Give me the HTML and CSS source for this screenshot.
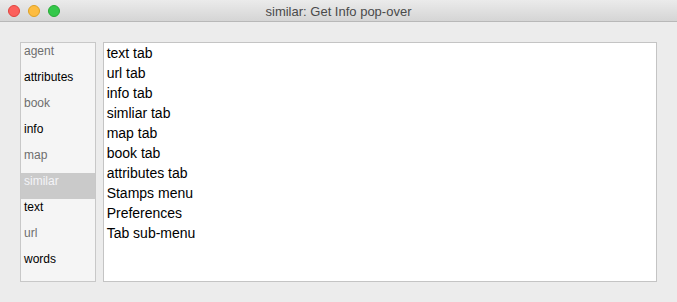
FILE: index.html
```html
<!DOCTYPE html>
<html>
<head>
<meta charset="utf-8">
<link rel="stylesheet" href="styles.css">
</head>
<body>
<div class="window">
  <div class="titlebar">
    <div class="lights">
      <span class="light red"></span>
      <span class="light yellow"></span>
      <span class="light green"></span>
    </div>
    <div class="title">similar: Get Info pop-over</div>
  </div>
  <div class="content">
    <ul class="sidebar">
      <li class="dim">agent</li>
      <li>attributes</li>
      <li class="dim">book</li>
      <li>info</li>
      <li class="dim">map</li>
      <li class="selected">similar</li>
      <li>text</li>
      <li class="dim">url</li>
      <li>words</li>
    </ul>
    <div class="textview">
      <div>text tab</div>
      <div>url tab</div>
      <div>info tab</div>
      <div>simliar tab</div>
      <div>map tab</div>
      <div>book tab</div>
      <div>attributes tab</div>
      <div>Stamps menu</div>
      <div>Preferences</div>
      <div>Tab sub-menu</div>
    </div>
  </div>
</div>
</body>
</html>
```
FILE: styles.css
```css
html, body {
  margin: 0;
  padding: 0;
  background: #ececec;
}
.window {
  width: 677px;
  height: 302px;
  background: #ececec;
  font-family: "Liberation Sans", Arial, sans-serif;
  display: flex;
  flex-direction: column;
}
.titlebar {
  height: 21px;
  border-bottom: 1px solid #b8b8b8;
  background: linear-gradient(#ebebeb, #d5d5d5);
  position: relative;
  display: flex;
  align-items: center;
  justify-content: center;
}
.lights {
  position: absolute;
  left: 8px;
  top: 5px;
  display: flex;
  gap: 8px;
}
.light {
  width: 12px;
  height: 12px;
  border-radius: 50%;
  box-sizing: border-box;
}
.red { background: #fc605c; border: 1px solid #e0443e; }
.yellow { background: #fdbc40; border: 1px solid #dea123; }
.green { background: #34c84a; border: 1px solid #27aa35; }
.title {
  font-size: 13px;
  color: #4a4a4a;
  padding-top: 1px;
}
.content {
  display: flex;
  padding: 20px 20px 0 20px;
  gap: 7px;
}
.sidebar {
  list-style: none;
  margin: 0;
  padding: 0;
  width: 74px;
  height: 238px;
  background: #f5f5f5;
  border: 1px solid #c8c8c8;
  font-size: 12px;
}
.sidebar li {
  height: 26px;
  line-height: 17px;
  padding-left: 3px;
  color: #000;
  box-sizing: border-box;
  white-space: nowrap;
}
.sidebar li.dim {
  color: #6e6e6e;
}
.sidebar li.selected {
  background: #cacaca;
  color: #f4f4f8;
}
.textview {
  width: 552px;
  height: 238px;
  background: #fff;
  border: 1px solid #c4c4c4;
  font-size: 14px;
  line-height: 20px;
  color: #000;
  padding-left: 3px;
  box-sizing: content-box;
}
```
